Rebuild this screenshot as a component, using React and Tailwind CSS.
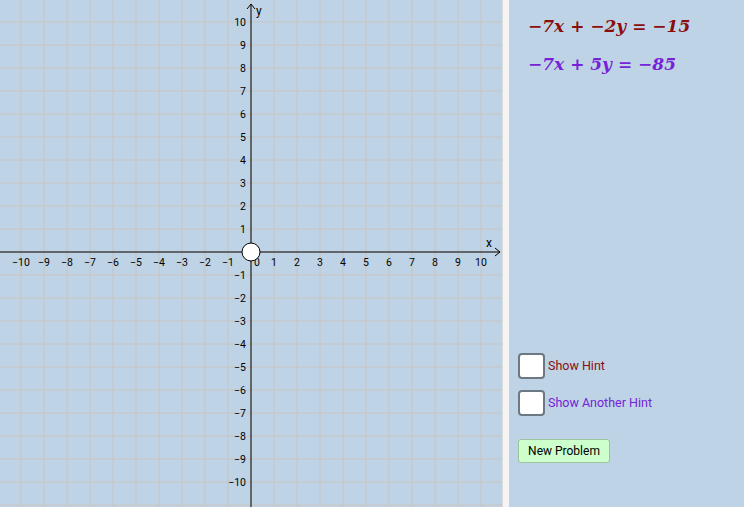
import React from 'react';

const U = 23;
const OX = 251;
const OY = 252;

const Graph = () => {
  const ticks = [];
  for (let i = -10; i <= 10; i++) ticks.push(i);
  const vlines = [];
  for (let x = OX - 11 * U; x < 502; x += U) vlines.push(x);
  const hlines = [];
  for (let y = OY - 11 * U; y < 507; y += U) hlines.push(y);
  return (
    <svg width="502" height="507" className="block shrink-0" style={{ fontFamily: 'Roboto, "Liberation Sans", sans-serif' }}>
      <rect width="502" height="507" fill="#bed4e6" />
      {vlines.map((x) => <line key={'v' + x} x1={x} y1="0" x2={x} y2="507" stroke="#c8c4c0" strokeWidth="1" />)}
      {hlines.map((y) => <line key={'h' + y} x1="0" y1={y} x2="502" y2={y} stroke="#c8c4c0" strokeWidth="1" />)}
      <line x1="0" y1={OY} x2="500" y2={OY} stroke="#000" strokeWidth="1" />
      <line x1={OX} y1="4" x2={OX} y2="507" stroke="#000" strokeWidth="1" />
      <path d={`M${OX - 4} 9 L${OX} 4 L${OX + 4} 9`} fill="none" stroke="#000" />
      <path d={`M495 ${OY - 4} L500 ${OY} L495 ${OY + 4}`} fill="none" stroke="#000" />
      <text x={OX + 5} y="15" fontSize="12">y</text>
      <text x="486" y={OY - 5} fontSize="12">x</text>
      {ticks.filter((i) => i !== 0).map((i) => (
        <text key={'tx' + i} x={OX + i * U} y={OY + 14} fontSize="10.5" textAnchor="middle">{i < 0 ? '\u2212' + -i : i}</text>
      ))}
      <text x={OX + 3} y={OY + 14} fontSize="10.5" textAnchor="start">0</text>
      {ticks.filter((i) => i !== 0).map((i) => (
        <text key={'ty' + i} x={OX - 5} y={OY - i * U + 4} fontSize="10.5" textAnchor="end">{i < 0 ? '\u2212' + -i : i}</text>
      ))}
      <circle cx={OX} cy={OY} r="9" fill="#fff" stroke="#000" strokeWidth="1" />
    </svg>
  );
};

const Check = ({ label, color }) => (
  <div className="flex items-center gap-[3px]">
    <div className="w-[27px] h-[26px] bg-white border-2 border-[#6c7884] rounded-[4px]" />
    <span className={`text-[12.5px] ${color}`}>{label}</span>
  </div>
);

export default function App() {
  return (
    <div className="w-[744px] h-[507px] flex overflow-hidden bg-[#bed4e6]" style={{ fontFamily: 'Roboto, "Liberation Sans", sans-serif' }}>
      <Graph />
      <div className="w-[7px] h-full bg-[#f4f4f4] border-l border-[#dcdcdc]" />
      <div className="flex-1 flex flex-col pl-[9px]">
        <div className="pt-[14px] pl-[10px] flex flex-col gap-[12px] font-bold italic text-[17px]" style={{ fontFamily: '"DejaVu Serif", "Liberation Serif", serif' }}>
          <div className="text-[#8b0d0d]">−7x + −2y = −15</div>
          <div className="text-[#7722d8]">−7x + 5y = −85</div>
        </div>
        <div className="mt-[276px] flex flex-col gap-[11px]">
          <Check label="Show Hint" color="text-[#8b0d0d]" />
          <Check label="Show Another Hint" color="text-[#7722d8]" />
          <button className="mt-[12px] w-[92px] h-[24px] bg-[#ccffcc] border border-[#9cc49c] rounded-[3px] text-[12px] text-black">New Problem</button>
        </div>
      </div>
    </div>
  );
}
